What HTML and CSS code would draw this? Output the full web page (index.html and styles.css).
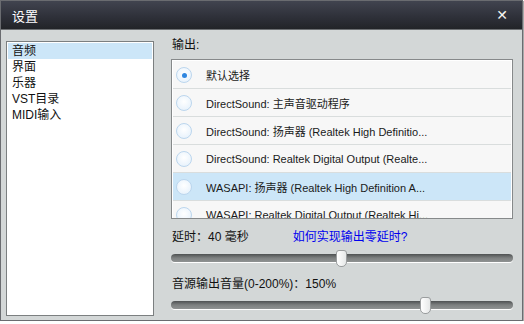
FILE: index.html
```html
<!DOCTYPE html>
<html lang="zh-CN">
<head>
  <meta charset="UTF-8" />
  <title>设置</title>
  <link rel="stylesheet" href="styles.css">
</head>
<body>

  <div class="window">
    <div class="title-bar">
      <span class="title">设置</span>
      <span class="close-button">✕</span>
    </div>

    <div class="content">
      <ul class="nav-list">
        <li class="nav-item selected">音频</li>
        <li class="nav-item">界面</li>
        <li class="nav-item">乐器</li>
        <li class="nav-item">VST目录</li>
        <li class="nav-item">MIDI输入</li>
      </ul>

      <div class="audio-panel">
        <div class="label output-label">输出:</div>
        <div class="output-list">
          <div class="output-row"><span class="radio checked"></span>默认选择</div>
          <div class="output-row"><span class="radio"></span>DirectSound: 主声音驱动程序</div>
          <div class="output-row"><span class="radio"></span>DirectSound: 扬声器 (Realtek High Definitio...</div>
          <div class="output-row"><span class="radio"></span>DirectSound: Realtek Digital Output (Realte...</div>
          <div class="output-row selected"><span class="radio"></span>WASAPI: 扬声器 (Realtek High Definition A...</div>
          <div class="output-row"><span class="radio"></span>WASAPI: Realtek Digital Output (Realtek Hi...</div>
        </div>

        <div class="label latency-label">
          <span>延时：40 毫秒</span>
          <a class="help-link" href="#">如何实现输出零延时?</a>
        </div>
        <div class="slider">
          <div class="track"></div>
          <div class="thumb" style="left: 165px"></div>
        </div>

        <div class="label volume-label">音源输出音量(0-200%)：150%</div>
        <div class="slider">
          <div class="track"></div>
          <div class="thumb" style="left: 249px"></div>
        </div>
      </div>
    </div>
  </div>

</body>
</html>
```

FILE: styles.css
```css
* {
  box-sizing: border-box;
}

body {
  margin: 0;
  background-color: #ffffff;
  font-family: "Liberation Sans", "Noto Sans CJK SC", sans-serif;
  font-size: 12px;
  color: #111;
}

.window {
  width: 523px;
  height: 321px;
  border: 1px solid #6a6c70;
  box-shadow: 1px 1px 0 #a8aaaa;
  background-color: #d3d7d7;
  display: flex;
  flex-direction: column;
}

.title-bar {
  flex-shrink: 0;
  height: 29px;
  background: linear-gradient(#41444f, #2f313a 55%, #222428);
  border-bottom: 1px solid #6c6f72;
  display: flex;
  align-items: center;
  justify-content: space-between;
  padding: 0 14px 0 11px;
  color: #fff;
}

.title {
  font-size: 13px;
}

.close-button {
  font-size: 14px;
  font-weight: bold;
  font-family: "DejaVu Sans", sans-serif;
  color: #f4f4f0;
}

.content {
  flex: 1;
  display: flex;
  padding: 7px 9px 0 5px;
  gap: 17px;
}

.nav-list {
  list-style: none;
  margin: 4px 0 0;
  padding: 1px;
  width: 148px;
  height: 275px;
  background-color: #fff;
  border: 1px solid #7b7f80;
}

.nav-item {
  height: 16px;
  line-height: 16px;
  padding-left: 4px;
}

.nav-item.selected {
  background-color: #cce6f8;
}

.audio-panel {
  flex: 1;
  display: flex;
  flex-direction: column;
}

.label {
  flex-shrink: 0;
  height: 16px;
  line-height: 16px;
  padding-left: 1px;
}

.output-label {
  margin-bottom: 6px;
}

.output-list {
  flex-shrink: 0;
  height: 160px;
  border: 1px solid #86898a;
  background-color: #fff;
  overflow: hidden;
  padding: 1px 1px 0 1px;
}

.output-row {
  height: 28px;
  border-bottom: 1px solid #d9dddd;
  background-color: #f7f7f7;
  display: flex;
  align-items: center;
  padding-left: 3px;
  font-size: 11px;
  color: #1a1a1a;
}

.output-row.selected {
  background-color: #cce6f8;
}

.radio {
  width: 16px;
  height: 16px;
  border-radius: 50%;
  border: 1px solid #bcd6ee;
  background: radial-gradient(circle at 50% 40%, #ffffff, #e2effb);
  margin-right: 14px;
  position: relative;
}

.radio.checked::after {
  content: "";
  position: absolute;
  left: 5px;
  top: 5px;
  width: 5px;
  height: 5px;
  border-radius: 50%;
  background-color: #2f86e0;
}

.latency-label {
  margin-top: 10px;
  display: flex;
}

.volume-label {
  margin-top: 7px;
}

.help-link {
  margin-left: 44px;
  color: #0000ee;
  text-decoration: none;
}

.slider {
  flex-shrink: 0;
  position: relative;
  height: 24px;
}

.track {
  position: absolute;
  left: 0;
  right: 0;
  top: 9px;
  height: 8px;
  border-radius: 4px;
  background: linear-gradient(#4e5152, #7d8080 50%, #8f9292);
  box-shadow: 0 1px 0 #ffffff;
}

.thumb {
  position: absolute;
  top: 5px;
  width: 11px;
  height: 17px;
  border: 1px solid #9a9d9e;
  border-radius: 3px 3px 5px 5px;
  background: linear-gradient(to right, #ffffff, #e6e8e8);
}
```
